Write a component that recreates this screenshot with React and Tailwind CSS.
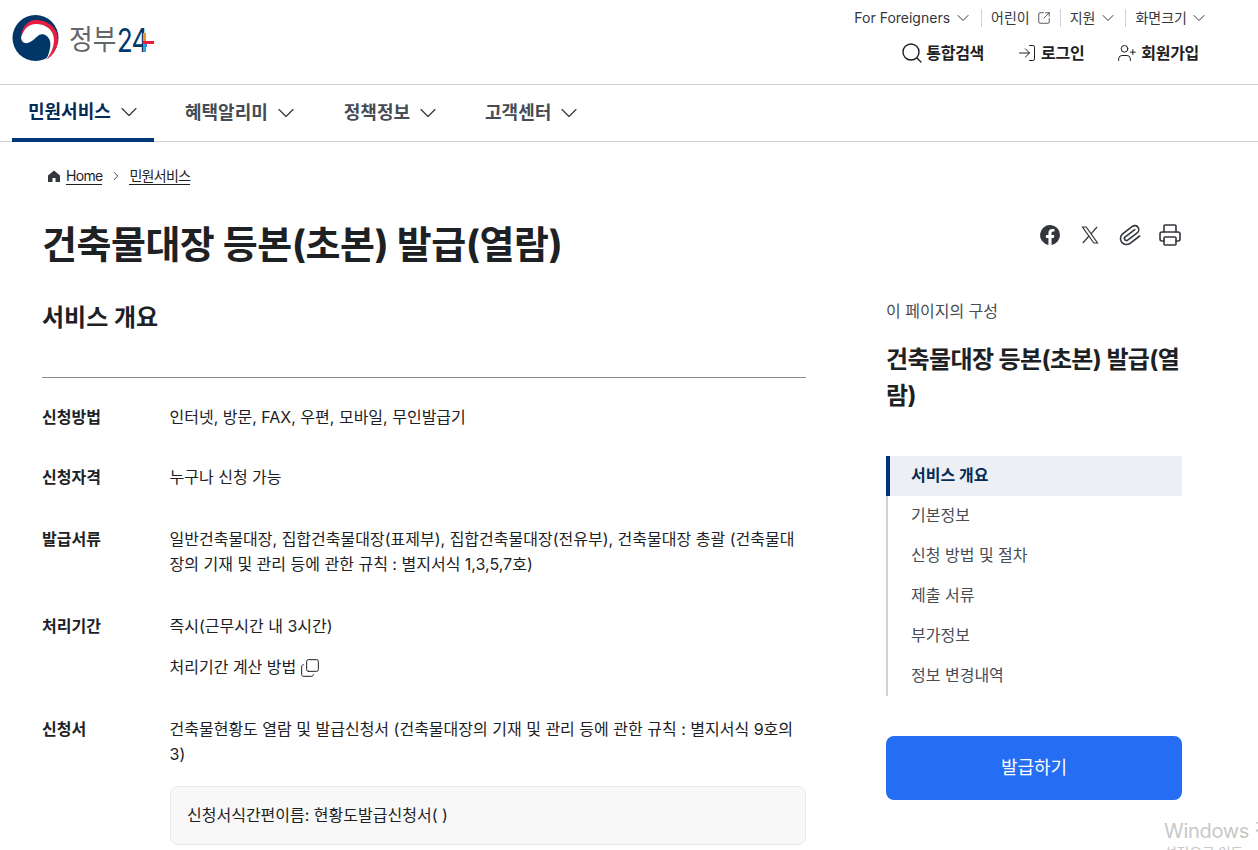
import { ChevronDown, ChevronRight, Search, LogIn, UserPlus, SquareArrowOutUpRight, Paperclip, Printer, Copy } from "lucide-react";

const font = "font-['Inter','Noto_Sans_CJK_KR',sans-serif]";

function Logo() {
  return (
    <div className="flex items-center">
      <svg width="48" height="46" viewBox="0 0 48 46" className="shrink-0">
        <circle cx="23.5" cy="23" r="23" fill="#003668" />
        <path d="M9 23C9 12 16 5 24 5C37 5 46 14 46 24C46 33 41 41 34 45C39 39 42 32 42 25C42 15 34 9 24 9C16 9 11 15 9 23Z" fill="#ed1c3f" />
        <path d="M9 23C11 15 16 9 24 9C34 9 42 15 42 25C42 32 39 39 34 45C38 37 39 30 38 26C36 20 31 18 27 20C22 24 18 29 13 28C11 27.500 9.500 26 9 23Z" fill="#fff" />
      </svg>
      <span className="mt-1 ml-[9px] inline-block w-[48px] origin-left scale-x-[0.92] text-[28px] leading-none whitespace-nowrap text-[#63666a]">정부</span>
      <span className="relative mt-1 inline-block h-[34px] w-[37px] text-[33px] leading-[34px] font-normal text-[#00376b]">
        <span className="inline-block origin-left scale-x-[0.78] tracking-[-1px]">24</span>
        <span className="absolute left-[26px] top-[18px] h-[3px] w-[11px] bg-[#ed1c3f]" />
        <span className="absolute left-[26px] top-[10px] h-[8px] w-[3px] bg-[#f7941d]" />
        <span className="absolute left-[26px] top-[21px] h-[8px] w-[3px] bg-[#2a9fdc]" />
      </span>
    </div>
  );
}

function UtilLink({ children, divider }) {
  return (
    <div className={`flex items-center text-sm text-[#33363d] ${divider ? "h-[18px] border-l border-[#cdd1d5] pl-[9px]" : ""}`}>
      {children}
    </div>
  );
}

function Header() {
  return (
    <header className="flex h-[85px] justify-between border-b border-[#cdd1d5] pl-3 pr-[49px]">
      <div className="pt-[15px]">
        <Logo />
      </div>
      <div className="flex flex-col items-end">
        <div className="mt-[9px] flex h-[18px] items-center">
          <UtilLink>For Foreigners <ChevronDown size={20} strokeWidth={1.2} className="ml-[3px] mr-[8px]" /></UtilLink>
          <UtilLink divider>어린이 <SquareArrowOutUpRight size={14} strokeWidth={1.4} className="ml-[7px] mr-[9px]" /></UtilLink>
          <UtilLink divider>지원 <ChevronDown size={20} strokeWidth={1.2} className="ml-[3px] mr-[7px]" /></UtilLink>
          <UtilLink divider>화면크기 <ChevronDown size={20} strokeWidth={1.2} className="ml-[2px]" /></UtilLink>
        </div>
        <div className="mt-[14px] mr-[10px] flex items-center gap-[33px] text-base font-bold text-[#1e2124] tracking-[-0.3px]">
          <div className="flex items-center gap-[2px]"><Search size={24} strokeWidth={1.4} />통합검색</div>
          <div className="flex items-center gap-[4px]"><LogIn size={20} strokeWidth={1.2} />로그인</div>
          <div className="flex items-center gap-[4px]"><UserPlus size={20} strokeWidth={1.2} />회원가입</div>
        </div>
      </div>
    </header>
  );
}

function MainNav() {
  const items = [
    { label: "민원서비스", cls: "w-[142px] border-b-4 border-[#003675] text-[#052b57]" },
    { label: "혜택알리미", cls: "ml-[15px] pb-[2px] text-[#464c53]" },
    { label: "정책정보", cls: "ml-[17px] pb-[2px] text-[#464c53]" },
    { label: "고객센터", cls: "ml-4 pb-[2px] text-[#464c53]" },
  ];
  return (
    <nav className="flex h-[57px] border-b border-[#cdd1d5] pl-3">
      {items.map((item) => (
        <div key={item.label} className={`flex h-[57px] items-center gap-1 pl-4 pr-[11px] text-lg font-bold ${item.cls}`}>
          {item.label}
          <ChevronDown size={28} strokeWidth={1} className="text-[#33363d]" />
        </div>
      ))}
    </nav>
  );
}

function Row({ label, children, className }) {
  return (
    <div className={`flex text-base leading-[25px] text-[#1e2124] ${className}`}>
      <div className="w-[127.500px] shrink-0 font-bold">{label}</div>
      <div className="flex-1">{children}</div>
    </div>
  );
}

function Overview() {
  return (
    <section className="w-[764px]">
      <h2 className="mt-px text-2xl leading-9 font-bold text-[#1e2124]">서비스 개요</h2>
      <div className="mt-[41px] border-t border-[#8a8d90]" />
      <Row label="신청방법" className="mt-[27px]">인터넷, 방문, FAX, 우편, 모바일, 무인발급기</Row>
      <Row label="신청자격" className="mt-[35px]">누구나 신청 가능</Row>
      <Row label="발급서류" className="mt-[37px]">
        일반건축물대장, 집합건축물대장(표제부), 집합건축물대장(전유부), 건축물대장 총괄 (건축물대장의 기재 및 관리 등에 관한 규칙 : 별지서식 1,3,5,7호)
      </Row>
      <Row label="처리기간" className="mt-[37px]">
        <div>즉시(근무시간 내 3시간)</div>
        <div className="mt-4 flex items-center gap-1">처리기간 계산 방법 <Copy size={20} strokeWidth={1.2} className="-scale-y-100" /></div>
      </Row>
      <Row label="신청서" className="mt-[37px]">
        건축물현황도 열람 및 발급신청서 (건축물대장의 기재 및 관리 등에 관한 규칙 : 별지서식 9호의3)
        <div className="mt-[19px] ml-[0.500px] flex h-[59px] items-center rounded-lg border border-[#e6e8ea] bg-[#f8f8f8] px-4">
          신청서식간편이름: 현황도발급신청서( )
        </div>
      </Row>
    </section>
  );
}

function SideNav() {
  const items = ["기본정보", "신청 방법 및 절차", "제출 서류", "부가정보", "정보 변경내역"];
  return (
    <aside className="w-[296px]">
      <p className="text-base leading-6 text-[#464c53]">이 페이지의 구성</p>
      <h3 className="mt-[19px] text-2xl leading-9 font-bold tracking-[-0.6px] break-all text-[#1e2124]">건축물대장 등본(초본) 발급(열람)</h3>
      <ul className="mt-[42px] text-base">
        <li className="flex h-10 items-center border-l-4 border-[#003675] bg-[#ecf0f5] pb-[2px] pl-[21px] font-bold text-[#052b57]">서비스 개요</li>
        {items.map((item) => (
          <li key={item} className="flex h-10 items-center border-l-2 border-[#ccd3dd] pb-[2px] pl-[23px] text-[#464c53]">{item}</li>
        ))}
      </ul>
      <button className="mt-10 h-16 w-full rounded-lg bg-[#256ef4] text-lg font-normal text-white">발급하기</button>
    </aside>
  );
}

export default function App() {
  return (
    <div className={`relative h-[850px] overflow-hidden bg-white ${font}`}>
      <Header />
      <MainNav />
      <main className="pl-[42px] pr-[76px]">
        <div className="ml-[6px] flex h-[68px] items-center text-sm tracking-[-0.7px] text-[#1e2124]">
          <svg width="12" height="12" viewBox="0 0 12 12" className="mr-[6px]">
            <path d="M6 .5 0 5.500V12h4.500V8h3v4H12V5.500Z" fill="#33363d" />
          </svg>
          <span className="border-b border-[#1e2124] leading-[17px]">Home</span>
          <ChevronRight size={14} strokeWidth={1.4} className="ml-[7px] mr-[6px]" />
          <span className="border-b border-[#1e2124] leading-[17px]">민원서비스</span>
        </div>
        <div className="mt-[2px] flex items-start justify-between">
          <h1 className="text-[38px] leading-[64px] font-bold tracking-[-0.5px] text-[#1e2124]">건축물대장 등본(초본) 발급(열람)</h1>
          <div className="mt-[11px] flex items-center gap-[16px] text-[#33363d]">
            <svg width="24" height="24" viewBox="0 0 24 24" fill="currentColor">
              <path d="M22 12a10 10 0 1 0-11.560 9.880v-6.990H7.900V12h2.540V9.800c0-2.500 1.490-3.890 3.770-3.890 1.090 0 2.240.2 2.240.2v2.460h-1.260c-1.240 0-1.630.77-1.630 1.560V12h2.770l-.44 2.890h-2.330v6.990A10 10 0 0 0 22 12Z" />
            </svg>
            <svg width="24" height="24" viewBox="0 0 24 24" fill="none" stroke="currentColor" strokeWidth="1.200">
              <path d="M4.500 4h3.700l11.300 16h-3.700ZM19 4l-6.200 7.100M11 13 4.800 20" />
            </svg>
            <Paperclip size={24} strokeWidth={1.6} className="rotate-[8deg]" />
            <Printer size={24} strokeWidth={1.6} />
          </div>
        </div>
        <div className="mt-[23px] flex justify-between">
          <Overview />
          <SideNav />
        </div>
      </main>
      <div className="absolute left-[1164px] top-[819px] whitespace-nowrap text-[20px] leading-6 tracking-[-0.3px] text-[#c8c8c8]">
        Windows 정품 인증
        <div className="text-sm leading-5">설정으로 이동</div>
      </div>
    </div>
  );
}
